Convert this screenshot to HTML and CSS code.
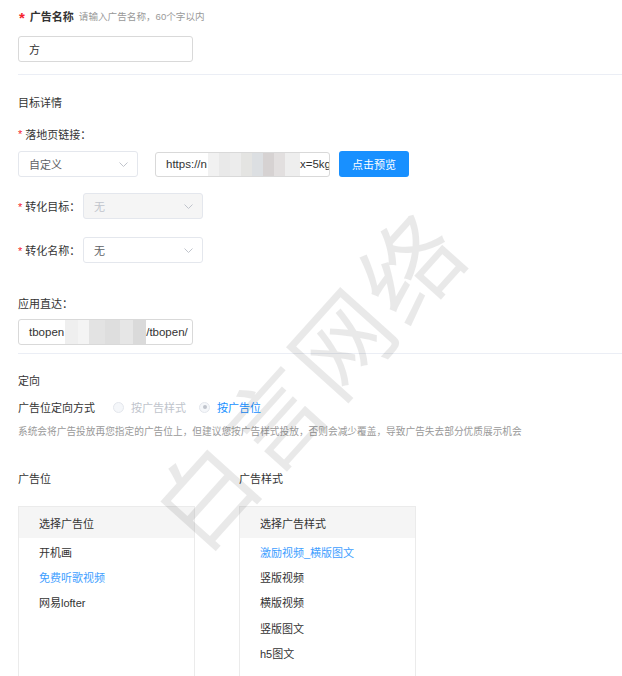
FILE: index.html
```html
<!DOCTYPE html>
<html lang="zh-CN">
<head>
<meta charset="utf-8">
<title>广告设置</title>
<link rel="stylesheet" href="styles.css">
</head>
<body>
<div class="page">
  <div class="row title-row">
    <span class="star big">*</span>
    <span class="title-label">广告名称</span>
    <span class="hint">请输入广告名称，60个字以内</span>
  </div>
  <div class="input name-input"><span>方</span></div>

  <div class="divider d1"></div>

  <div class="row section s1">目标详情</div>

  <div class="row label-row l1"><span class="star">*</span>落地页链接：</div>
  <div class="link-row">
    <div class="select sel-custom"><span>自定义</span><svg class="chev" width="9" height="5" viewBox="0 0 9 5"><path d="M0.5 0.5L4.5 4.5L8.5 0.5" fill="none" stroke="#c0c4cc" stroke-width="1"/></svg></div>
    <div class="input url-input"><span class="txt">https://n</span><span class="blur blur-url"></span><span class="txt">x=5kg</span></div>
    <button class="btn">点击预览</button>
  </div>

  <div class="form-row f1">
    <div class="form-label"><span class="star">*</span>转化目标：</div>
    <div class="select disabled"><span>无</span><svg class="chev" width="9" height="5" viewBox="0 0 9 5"><path d="M0.5 0.5L4.5 4.5L8.5 0.5" fill="none" stroke="#c0c4cc" stroke-width="1"/></svg></div>
  </div>
  <div class="form-row f2">
    <div class="form-label"><span class="star">*</span>转化名称：</div>
    <div class="select"><span>无</span><svg class="chev" width="9" height="5" viewBox="0 0 9 5"><path d="M0.5 0.5L4.5 4.5L8.5 0.5" fill="none" stroke="#c0c4cc" stroke-width="1"/></svg></div>
  </div>

  <div class="row label-row l2">应用直达：</div>
  <div class="input app-input"><span class="txt">tbopen</span><span class="blur blur-app"></span><span class="txt">/tbopen/</span></div>

  <div class="divider d2"></div>

  <div class="row section s2">定向</div>
  <div class="row radio-row">
    <span class="radio-title">广告位定向方式</span>
    <span class="radio dis"><span class="dot"></span>按广告样式</span>
    <span class="radio on"><span class="dot"><i></i></span>按广告位</span>
  </div>
  <div class="row desc">系统会将广告投放再您指定的广告位上，但建议您按广告样式投放，否则会减少覆盖，导致广告失去部分优质展示机会</div>

  <div class="cols">
    <div class="col">
      <div class="row col-title">广告位</div>
      <div class="box">
        <div class="box-head">选择广告位</div>
        <ul class="list">
          <li>开机画</li>
          <li class="active">免费听歌视频</li>
          <li>网易lofter</li>
        </ul>
      </div>
    </div>
    <div class="col">
      <div class="row col-title">广告样式</div>
      <div class="box">
        <div class="box-head">选择广告样式</div>
        <ul class="list">
          <li class="active">激励视频_横版图文</li>
          <li>竖版视频</li>
          <li>横版视频</li>
          <li>竖版图文</li>
          <li>h5图文</li>
        </ul>
      </div>
    </div>
  </div>
</div>
<div class="watermark">白言网络</div>
</body>
</html>
```
FILE: styles.css
```css
html, body {
  margin: 0;
  padding: 0;
  height: 676px;
  overflow: hidden;
  background: #fff;
}
body {
  position: relative;
  font-family: "Liberation Sans", "Noto Sans CJK SC", sans-serif;
  font-size: 11px;
  color: #333;
}
.page {
  padding-left: 18px;
  padding-top: 6px;
}
.row {
  height: 20px;
  display: flex;
  align-items: center;
}
.star {
  color: #f5222d;
  margin-right: 3px;
  font-size: 11px;
}
.star.big {
  font-size: 15px;
  font-weight: bold;
  margin-right: 5px;
  margin-left: 1px;
  position: relative;
  top: 1px;
}
.title-label {
  font-weight: bold;
  color: #333;
  font-size: 11px;
}
.hint {
  color: #999;
  font-size: 9.6px;
  margin-left: 5px;
}
.input {
  box-sizing: border-box;
  height: 26px;
  border: 1px solid #d9d9d9;
  border-radius: 3px;
  padding-left: 10px;
  display: flex;
  align-items: center;
  color: #333;
  font-size: 11.5px;
  overflow: hidden;
  white-space: nowrap;
  background: #fff;
}
.name-input {
  width: 175px;
  margin-top: 10px;
  font-size: 11px;
}
.divider {
  height: 1px;
  background: #ebeef5;
}
.d1 { margin-top: 12px; }
.s1 { margin-top: 17px; }
.section { color: #333; }
.label-row { color: #333; }
.l1 { margin-top: 12px; }
.link-row {
  display: flex;
  align-items: center;
  margin-top: 7px;
  height: 26px;
}
.select {
  box-sizing: border-box;
  width: 120px;
  height: 26px;
  border: 1px solid #e4e7ed;
  border-radius: 3px;
  padding: 0 9px 0 10px;
  display: flex;
  align-items: center;
  justify-content: space-between;
  color: #606266;
  background: #fff;
}
.select.disabled {
  background: #f5f5f5;
  color: #c0c4cc;
}
.chev { display: block; }
.url-input {
  width: 175px;
  margin-left: 17px;
  height: 25px;
  color: #333;
}
.blur {
  display: inline-block;
  flex: none;
  background:
    linear-gradient(90deg,
      #f1f1f1 0 12%, #e9e9e9 12% 24%, #ececec 24% 36%, #e4e4e2 36% 48%,
      #dcdfe2 48% 60%, #d6d2d2 60% 72%, #e2dfdf 72% 84%, #eeeeee 84% 100%);
}
.blur-url {
  width: 92px;
  height: 25px;
  margin-left: 1px;
}
.blur-app {
  width: 81px;
  height: 25px;
  margin-left: 1px;
  background:
    linear-gradient(90deg,
      #efefef 0 16%, #f4f4f4 16% 30%, #e3e3e3 30% 50%, #dedede 50% 68%,
      #e6e6e6 68% 84%, #dadada 84% 100%);
}
.btn {
  margin-left: 9px;
  width: 70px;
  height: 26px;
  border: none;
  border-radius: 3px;
  background: #1890ff;
  color: #fff;
  font-family: inherit;
  font-size: 11px;
  padding: 0;
}
.form-row {
  display: flex;
  align-items: center;
  height: 26px;
}
.form-label {
  width: 65px;
  color: #333;
}
.f1 { margin-top: 16px; }
.f2 { margin-top: 18px; }
.l2 { margin-top: 30px; }
.app-input {
  width: 175px;
  margin-top: 6px;
}
.d2 { margin-top: 8px; }
.s2 { margin-top: 16px; }
.radio-row {
  margin-top: 7px;
}
.radio-title { color: #333; margin-right: 18px; }
.radio {
  display: inline-flex;
  align-items: center;
  margin-right: 13px;
}
.radio .dot {
  box-sizing: border-box;
  width: 11px;
  height: 11px;
  border-radius: 50%;
  border: 1px solid #e4e7ed;
  background: #f5f7fa;
  margin-right: 7px;
  display: inline-flex;
  align-items: center;
  justify-content: center;
}
.radio .dot i {
  width: 4px;
  height: 4px;
  border-radius: 50%;
  background: #c0c4cc;
}
.radio.dis { color: #c0c4cc; }
.radio.on { color: #1890ff; }
.desc {
  margin-top: 4px;
  color: #999;
  font-size: 9.7px;
  white-space: nowrap;
}
.cols {
  display: flex;
  gap: 44px;
  margin-top: 27px;
}
.col { width: 177px; }
.col-title { color: #333; }
.box {
  margin-top: 18px;
  box-sizing: border-box;
  height: 175px;
  border: 1px solid #ebebeb;
  border-bottom: none;
}
.box-head {
  height: 31px;
  background: #f5f5f5;
  display: flex;
  align-items: center;
  padding-left: 20px;
  color: #333;
}
.list {
  list-style: none;
  margin: 0;
  padding: 3px 0 0 20px;
}
.list li {
  height: 25.2px;
  line-height: 25.2px;
  color: #333;
}
.list li.active { color: #409eff; }
.watermark {
  position: absolute;
  left: 305px;
  top: 376px;
  transform: translate(-50%, -50%) rotate(-48deg);
  font-size: 98px;
  letter-spacing: 4px;
  font-weight: 400;
  color: rgba(0, 0, 0, 0.085);
  white-space: nowrap;
  pointer-events: none;
  font-family: "Noto Sans CJK SC", sans-serif;
  line-height: 1;
}
```
